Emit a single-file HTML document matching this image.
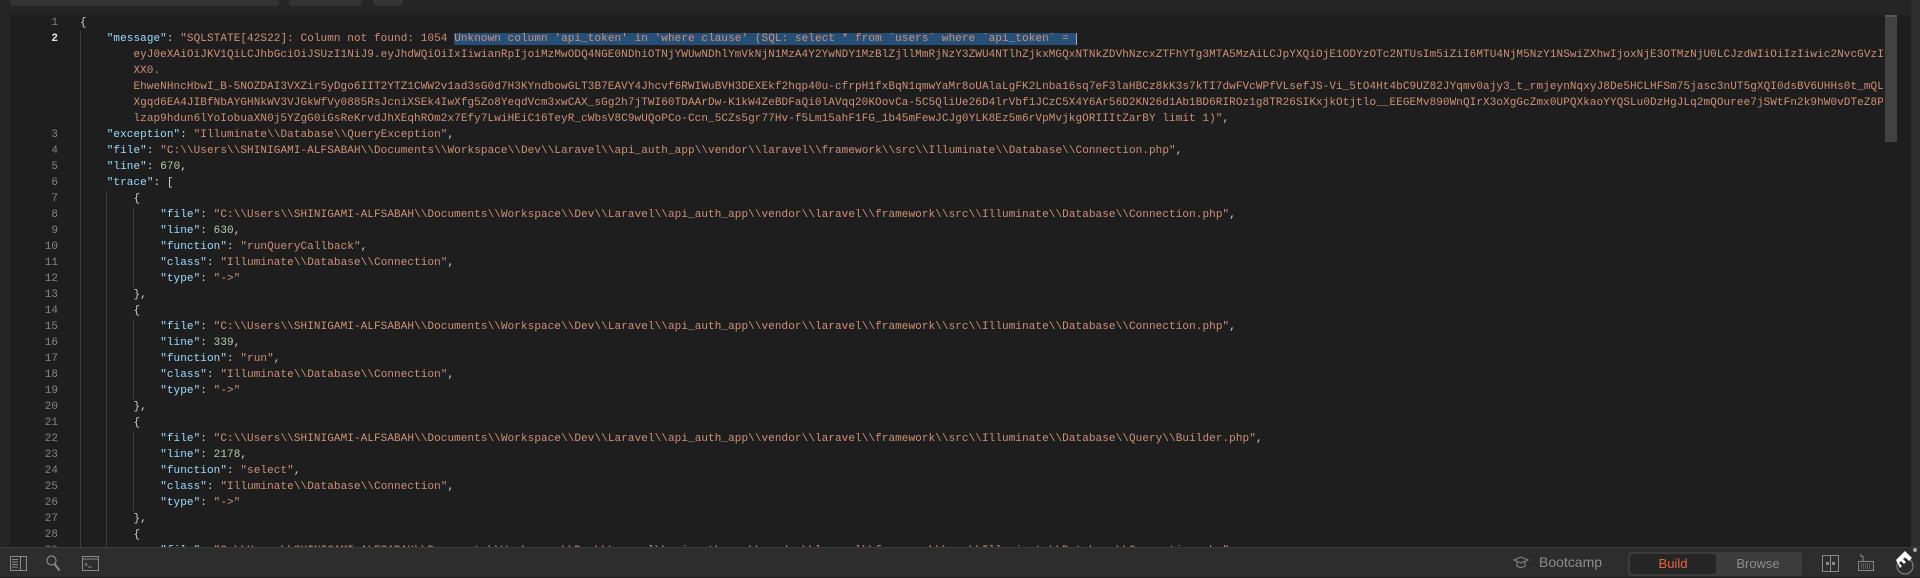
<!DOCTYPE html>
<html><head><meta charset="utf-8">
<style>
*{margin:0;padding:0;box-sizing:border-box}
body{width:1920px;height:577px;background:#1e1e1e;overflow:hidden;position:relative;font-family:"Liberation Mono",monospace;font-size:11px}
.abs{position:absolute}
.row{position:absolute;left:80px;height:16px;line-height:16px;white-space:pre;color:#d4d4d4;width:1803px;overflow:hidden;letter-spacing:0.08px}
.ln{position:absolute;left:10px;width:48px;text-align:right;height:16px;line-height:16px;color:#858585}
.k{color:#9cdcfe}.s{color:#ce9178}.n{color:#b5cea8}
.sel{background:#264f78}
.g{position:absolute;width:1px;background:#404040}
</style></head><body>
<div class="abs" style="left:0;top:0;width:1920px;height:15px;background:#252526"></div>
<div class="abs" style="left:10px;top:0;width:269px;height:6px;background:#333;border-radius:0 0 3px 3px"></div>
<div class="abs" style="left:289px;top:0;width:73px;height:6px;background:#333;border-radius:0 0 3px 3px"></div>
<div class="abs" style="left:373px;top:0;width:30px;height:6px;background:#333;border-radius:0 0 3px 3px"></div>
<div class="abs" style="left:0;top:15px;width:10px;height:532px;background:#252526"></div>
<div class="abs" style="left:1911px;top:0;width:9px;height:547px;background:#2d2d2d"></div>
<div class="abs" style="left:1885px;top:15px;width:12px;height:127px;background:#424242;border-top:2px solid #5a5a5a"></div>

<div class="g" style="left:80px;top:31px;height:516px"></div>
<div class="g" style="left:106px;top:191px;height:356px"></div>
<div class="g" style="left:133px;top:207px;height:80px"></div>
<div class="g" style="left:133px;top:319px;height:80px"></div>
<div class="g" style="left:133px;top:431px;height:80px"></div>

<div class="ln" style="top:15px">1</div>
<div class="ln" style="top:31px;color:#e8e8e8;font-weight:bold">2</div>
<div class="ln" style="top:127px">3</div>
<div class="ln" style="top:143px">4</div>
<div class="ln" style="top:159px">5</div>
<div class="ln" style="top:175px">6</div>
<div class="ln" style="top:191px">7</div>
<div class="ln" style="top:207px">8</div>
<div class="ln" style="top:223px">9</div>
<div class="ln" style="top:239px">10</div>
<div class="ln" style="top:255px">11</div>
<div class="ln" style="top:271px">12</div>
<div class="ln" style="top:287px">13</div>
<div class="ln" style="top:303px">14</div>
<div class="ln" style="top:319px">15</div>
<div class="ln" style="top:335px">16</div>
<div class="ln" style="top:351px">17</div>
<div class="ln" style="top:367px">18</div>
<div class="ln" style="top:383px">19</div>
<div class="ln" style="top:399px">20</div>
<div class="ln" style="top:415px">21</div>
<div class="ln" style="top:431px">22</div>
<div class="ln" style="top:447px">23</div>
<div class="ln" style="top:463px">24</div>
<div class="ln" style="top:479px">25</div>
<div class="ln" style="top:495px">26</div>
<div class="ln" style="top:511px">27</div>
<div class="ln" style="top:527px">28</div>
<div class="ln" style="top:543px">29</div>

<div class="row" style="top:15px">{</div>
<div class="row" style="top:31px">    <span class="k">"message"</span>: <span class="s">"SQLSTATE[42S22]: Column not found: 1054 <span class="sel">Unknown column 'api_token' in 'where clause' (SQL: select * from `users` where `api_token` = </span></span><span style="border-left:1px solid #aaa"></span></div>
<div class="row s" style="top:47px">        eyJ0eXAiOiJKV1QiLCJhbGciOiJSUzI1NiJ9.eyJhdWQiOiIxIiwianRpIjoiMzMwODQ4NGE0NDhiOTNjYWUwNDhlYmVkNjN1MzA4Y2YwNDY1MzBlZjllMmRjNzY3ZWU4NTlhZjkxMGQxNTNkZDVhNzcxZTFhYTg3MTA5MzAiLCJpYXQiOjE1ODYzOTc2NTUsIm5iZiI6MTU4NjM5NzY1NSwiZXhwIjoxNjE3OTMzNjU0LCJzdWIiOiIzIiwic2NvcGVzIjpb</div>
<div class="row s" style="top:63px">        XX0.</div>
<div class="row s" style="top:79px">        EhweNHncHbwI_B-5NOZDAI3VXZir5yDgo6IIT2YTZ1CWW2v1ad3sG0d7H3KYndbowGLT3B7EAVY4Jhcvf6RWIWuBVH3DEXEkf2hqp40u-cfrpH1fxBqN1qmwYaMr8oUAlaLgFK2Lnba16sq7eF3laHBCz8kK3s7kTI7dwFVcWPfVLsefJS-Vi_5tO4Ht4bC9UZ82JYqmv0ajy3_t_rmjeynNqxyJ8De5HCLHFSm75jasc3nUT5gXQI0dsBV6UHHs0t_mQLrYu</div>
<div class="row s" style="top:95px">        Xgqd6EA4JIBfNbAYGHNkWV3VJGkWfVy0885RsJcniXSEk4IwXfg5Zo8YeqdVcm3xwCAX_sGg2h7jTWI60TDAArDw-K1kW4ZeBDFaQi0lAVqq20KOovCa-5C5QliUe26D4lrVbf1JCzC5X4Y6Ar56D2KN26d1Ab1BD6RIROz1g8TR26SIKxjkOtjtlo__EEGEMv890WnQIrX3oXgGcZmx0UPQXkaoYYQSLu0DzHgJLq2mQOuree7jSWtFn2k9hW0vDTeZ8Po1O</div>
<div class="row" style="top:111px">        <span class="s">lzap9hdun6lYoIobuaXN0j5YZgG0iGsReKrvdJhXEqhROm2x7Efy7LwiHEiC16TeyR_cWbsV8C9wUQoPCo-Ccn_5CZs5gr77Hv-f5Lm15ahF1FG_1b45mFewJCJg0YLK8Ez5m6rVpMvjkgORIIItZarBY limit 1)"</span>,</div>
<div class="row" style="top:127px">    <span class="k">"exception"</span>: <span class="s">"Illuminate\\Database\\QueryException"</span>,</div>
<div class="row" style="top:143px">    <span class="k">"file"</span>: <span class="s">"C:\\Users\\SHINIGAMI-ALFSABAH\\Documents\\Workspace\\Dev\\Laravel\\api_auth_app\\vendor\\laravel\\framework\\src\\Illuminate\\Database\\Connection.php"</span>,</div>
<div class="row" style="top:159px">    <span class="k">"line"</span>: <span class="n">670</span>,</div>
<div class="row" style="top:175px">    <span class="k">"trace"</span>: [</div>
<div class="row" style="top:191px">        {</div>
<div class="row" style="top:207px">            <span class="k">"file"</span>: <span class="s">"C:\\Users\\SHINIGAMI-ALFSABAH\\Documents\\Workspace\\Dev\\Laravel\\api_auth_app\\vendor\\laravel\\framework\\src\\Illuminate\\Database\\Connection.php"</span>,</div>
<div class="row" style="top:223px">            <span class="k">"line"</span>: <span class="n">630</span>,</div>
<div class="row" style="top:239px">            <span class="k">"function"</span>: <span class="s">"runQueryCallback"</span>,</div>
<div class="row" style="top:255px">            <span class="k">"class"</span>: <span class="s">"Illuminate\\Database\\Connection"</span>,</div>
<div class="row" style="top:271px">            <span class="k">"type"</span>: <span class="s">"-&gt;"</span></div>
<div class="row" style="top:287px">        },</div>
<div class="row" style="top:303px">        {</div>
<div class="row" style="top:319px">            <span class="k">"file"</span>: <span class="s">"C:\\Users\\SHINIGAMI-ALFSABAH\\Documents\\Workspace\\Dev\\Laravel\\api_auth_app\\vendor\\laravel\\framework\\src\\Illuminate\\Database\\Connection.php"</span>,</div>
<div class="row" style="top:335px">            <span class="k">"line"</span>: <span class="n">339</span>,</div>
<div class="row" style="top:351px">            <span class="k">"function"</span>: <span class="s">"run"</span>,</div>
<div class="row" style="top:367px">            <span class="k">"class"</span>: <span class="s">"Illuminate\\Database\\Connection"</span>,</div>
<div class="row" style="top:383px">            <span class="k">"type"</span>: <span class="s">"-&gt;"</span></div>
<div class="row" style="top:399px">        },</div>
<div class="row" style="top:415px">        {</div>
<div class="row" style="top:431px">            <span class="k">"file"</span>: <span class="s">"C:\\Users\\SHINIGAMI-ALFSABAH\\Documents\\Workspace\\Dev\\Laravel\\api_auth_app\\vendor\\laravel\\framework\\src\\Illuminate\\Database\\Query\\Builder.php"</span>,</div>
<div class="row" style="top:447px">            <span class="k">"line"</span>: <span class="n">2178</span>,</div>
<div class="row" style="top:463px">            <span class="k">"function"</span>: <span class="s">"select"</span>,</div>
<div class="row" style="top:479px">            <span class="k">"class"</span>: <span class="s">"Illuminate\\Database\\Connection"</span>,</div>
<div class="row" style="top:495px">            <span class="k">"type"</span>: <span class="s">"-&gt;"</span></div>
<div class="row" style="top:511px">        },</div>
<div class="row" style="top:527px">        {</div>
<div class="row" style="top:543px">            <span class="k">"file"</span>: <span class="s">"C:\\Users\\SHINIGAMI-ALFSABAH\\Documents\\Workspace\\Dev\\Laravel\\api_auth_app\\vendor\\laravel\\framework\\src\\Illuminate\\Database\\Connection.php"</span>,</div>

<!-- status bar -->
<div class="abs" style="left:0;top:547px;width:1920px;height:30px;background:#2d2d2d;border-top:1px solid #3c3c3c;font-family:'Liberation Sans',sans-serif">
  <svg class="abs" style="left:10px;top:8px" width="17" height="15" viewBox="0 0 17 15" fill="none" stroke="#8a8a8a" stroke-width="1"><rect x="0.5" y="0.5" width="16" height="14"/><line x1="10.5" y1="0.5" x2="10.5" y2="14.5"/><line x1="2" y1="3.5" x2="8" y2="3.5"/><line x1="2" y1="6" x2="8" y2="6"/><line x1="2" y1="8.5" x2="8" y2="8.5"/><line x1="2" y1="11" x2="8" y2="11"/></svg>
  <svg class="abs" style="left:46px;top:7px" width="15" height="17" viewBox="0 0 15 17" fill="none" stroke="#8a8a8a" stroke-width="1.2"><circle cx="5.5" cy="5.5" r="4.5"/><line x1="8.5" y1="9" x2="13.5" y2="15.5" stroke-width="2"/></svg>
  <svg class="abs" style="left:82px;top:8px" width="17" height="15" viewBox="0 0 17 15" fill="none" stroke="#8a8a8a" stroke-width="1"><rect x="0.5" y="0.5" width="16" height="14"/><line x1="0.5" y1="3" x2="16.5" y2="3"/><path d="M3 7l2 1.5-2 1.5M6 11h4"/></svg>
  <svg class="abs" style="left:1513px;top:8px" width="16" height="13" viewBox="0 0 16 13" fill="none" stroke="#8a8a8a" stroke-width="1"><path d="M1 4L8 1l7 3-7 3z"/><path d="M4 6v4c2 2 6 2 8 0V6"/></svg>
  <div class="abs" style="left:1539px;top:6px;color:#8d8d8d;font-size:14px">Bootcamp</div>
  <div class="abs" style="left:1628px;top:4px;width:174px;height:24px;background:#3c3c3c;border-radius:3px"></div>
  <div class="abs" style="left:1630px;top:6px;width:86px;height:20px;background:#262626;border-radius:3px;color:#e8643a;font-size:13px;text-align:center;line-height:20px">Build</div>
  <div class="abs" style="left:1716px;top:6px;width:84px;height:20px;color:#8d8d8d;font-size:13px;text-align:center;line-height:20px">Browse</div>
  <svg class="abs" style="left:1822px;top:7px" width="17" height="17" viewBox="0 0 17 17" fill="none" stroke="#8a8a8a"><rect x="0.5" y="0.5" width="16" height="16"/><line x1="8.5" y1="0.5" x2="8.5" y2="16.5"/><rect x="4" y="7" width="3" height="3" fill="#8a8a8a" stroke="none"/><rect x="10" y="7" width="3" height="3" fill="#8a8a8a" stroke="none"/></svg>
  <svg class="abs" style="left:1858px;top:5px" width="16" height="19" viewBox="0 0 16 19" fill="none" stroke="#8a8a8a"><path d="M5 8V3.5h-2V1"/><rect x="0.5" y="8.5" width="15" height="9"/><path d="M3 11h10M3 13h10M3 15h10" stroke-dasharray="1 1"/></svg>
  <svg class="abs" style="left:1890px;top:0px" width="30" height="30" viewBox="0 0 30 30"><circle cx="15" cy="18" r="8" fill="none" stroke="#8a8a8a" stroke-width="1"/><path d="M6 12l9-9 7 7-3 3-4-4-2 2 3 3-2 2-3-3-2 2 3 3-2 2z" fill="#fff"/><circle cx="25" cy="2" r="2" fill="#aaa"/></svg>
</div>
</body></html>
